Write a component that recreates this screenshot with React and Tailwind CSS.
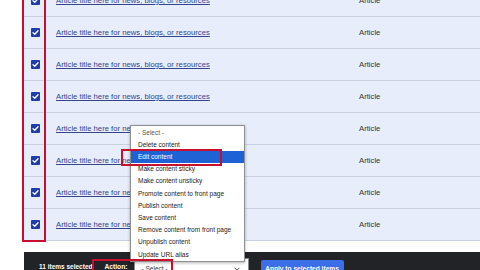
import React from "react";

const Check = () => (
  <svg viewBox="0 0 10 10" className="w-[9px] h-[9px] block">
    <rect x="0" y="0" width="10" height="10" rx="1" fill="#1b3ea8" />
    <path d="M2.3 5.2 L4.2 7 L7.8 3" stroke="#fff" strokeWidth="1.5" fill="none" strokeLinecap="round" strokeLinejoin="round" />
  </svg>
);

const menu = [
  "- Select -",
  "Delete content",
  "Edit content",
  "Make content sticky",
  "Make content unsticky",
  "Promote content to front page",
  "Publish content",
  "Save content",
  "Remove content from front page",
  "Unpublish content",
  "Update URL alias",
];

export default function App() {
  const rows = Array.from({ length: 8 });
  return (
    <div className="relative w-[480px] h-[270px] overflow-hidden bg-white" style={{ fontFamily: '"Liberation Sans", Arial, sans-serif' }}>
      <div className="ml-[23px] mt-[-15px] flex flex-col">
        {rows.map((_, i) => (
          <div key={i} className="flex items-center h-[32px] bg-[#e7edfb] border-b border-[#c9d1e3]">
            <div className="w-[8px]" />
            <Check />
            <div className="w-[16px]" />
            <span className="text-[7.7px] text-[#34458e] underline w-[303px] whitespace-nowrap">Article title here for news, blogs, or resources</span>
            <span className="text-[7.7px] text-[#333]">Article</span>
          </div>
        ))}
      </div>
      <div className="h-[11px]" />
      <div className="ml-[24px] h-[40px] bg-[#222327] flex items-start pt-[8px]">
        <span className="ml-[15px] mt-[2px] text-[6.5px] font-bold text-white whitespace-nowrap">11 items selected</span>
        <span className="ml-[12px] mt-[2px] text-[6.7px] font-bold text-white">Action:</span>
        <div className="ml-[6px] mt-[-2px] w-[115px] h-[22px] bg-white border border-[#8a8a8a] flex items-start justify-between px-[7px] pt-[5px]">
          <span className="text-[6.5px] text-[#333]">- Select -</span>
          <svg viewBox="0 0 10 10" className="w-[8px] h-[8px] mt-[1px]">
            <path d="M2 3.5 L5 6.5 L8 3.5" stroke="#444" strokeWidth="1.2" fill="none" />
          </svg>
        </div>
        <div className="ml-[12px] h-[20px] w-[83px] bg-[#3c6ee8] rounded-[2px] flex items-start justify-center pt-[4px]">
          <span className="text-[6.6px] font-bold text-white whitespace-nowrap">Apply to selected items</span>
        </div>
      </div>

      <div className="absolute left-[130px] top-[125px] w-[115px] bg-white border border-[#8f8f8f] shadow-[0_1px_3px_rgba(0,0,0,0.3)] py-[0.5px]">
        {menu.map((m, i) => (
          <div key={m} className={"h-[12.2px] flex items-center pl-[7px] text-[6.5px] whitespace-nowrap " + (i === 2 ? "bg-[#1f62d6] text-white" : i === 0 ? "text-[#555]" : "text-[#222]")}>
            {m}
          </div>
        ))}
      </div>

      <div className="absolute left-[22px] top-[-5px] w-[24px] h-[247px] border-2 border-[#c8102e]" />
      <div className="absolute left-[121px] top-[149px] w-[101px] h-[17px] border-2 border-[#c8102e]" />
      <div className="absolute left-[92px] top-[259px] w-[81px] h-[20px] border-2 border-[#c8102e]" />
    </div>
  );
}
